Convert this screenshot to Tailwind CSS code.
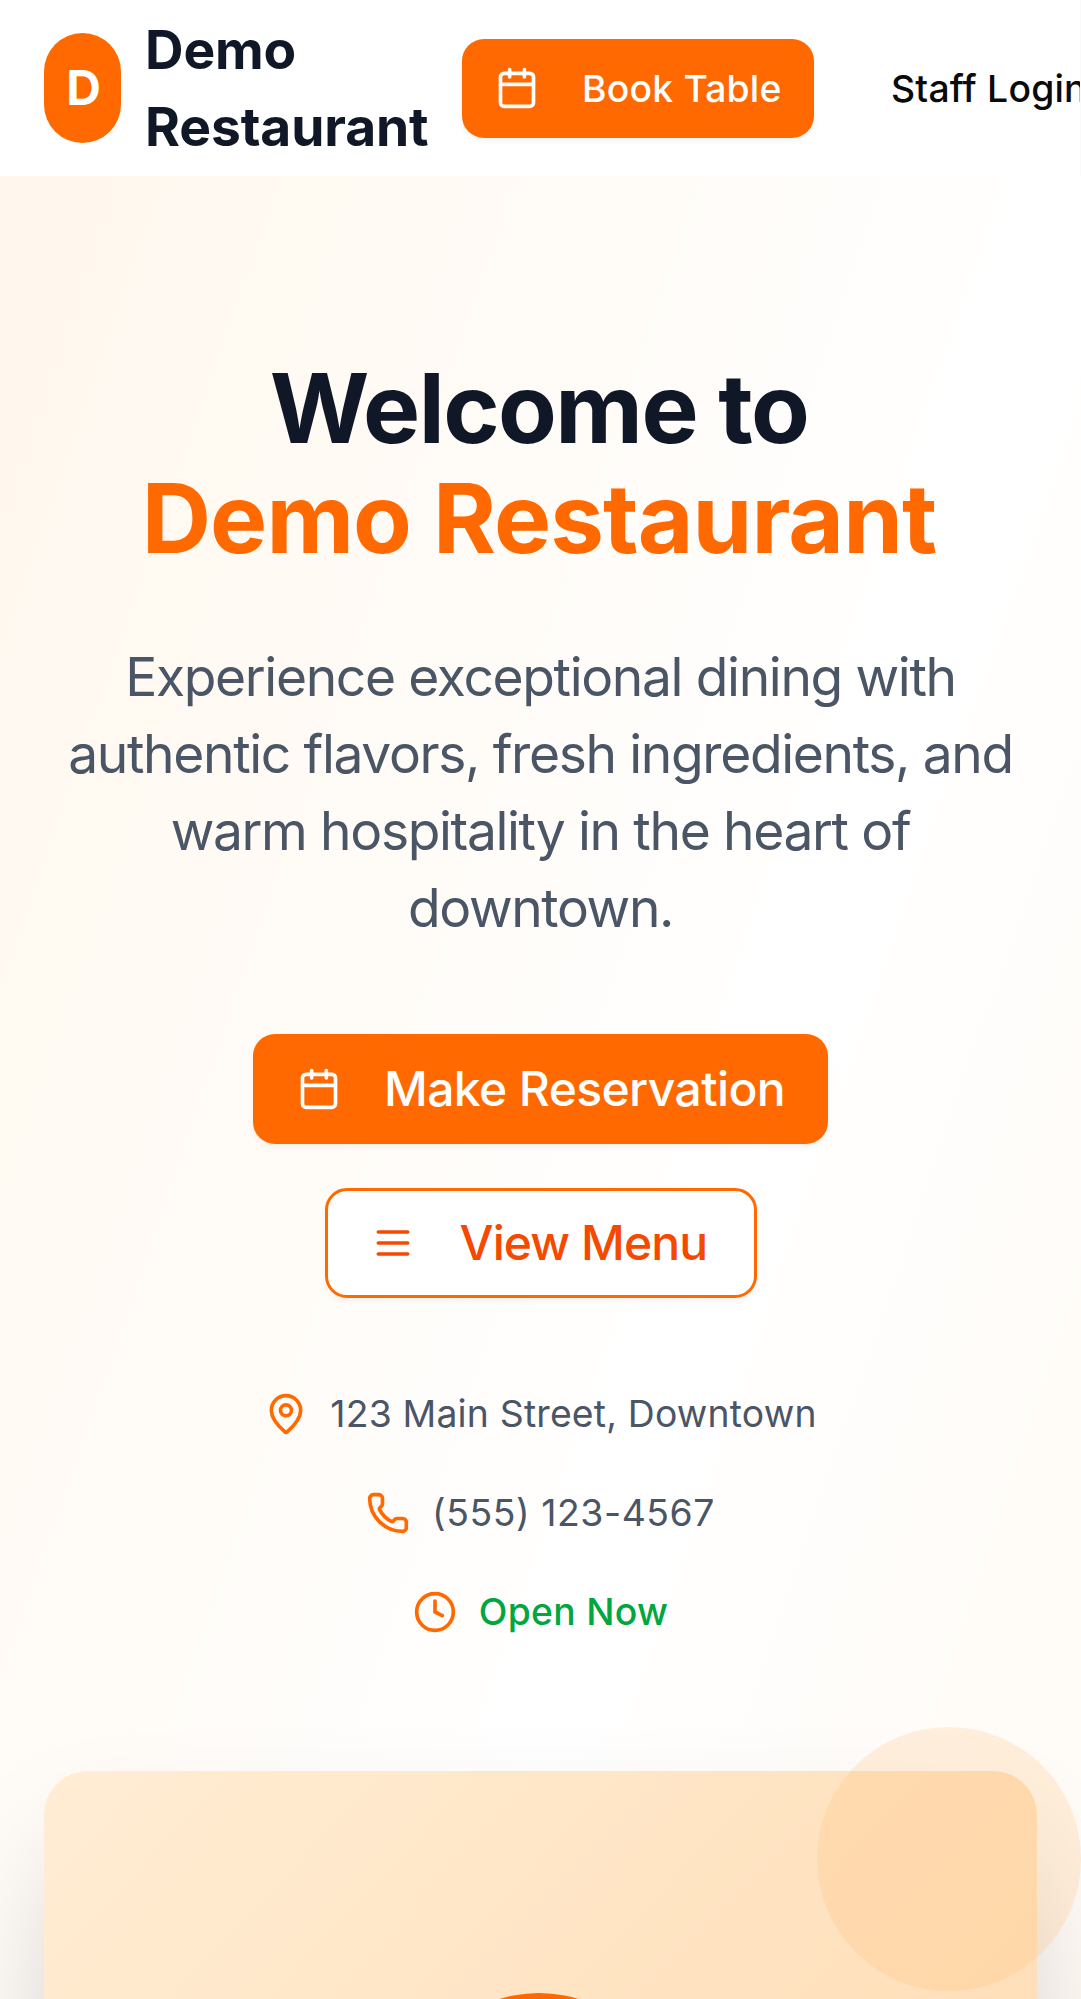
<!DOCTYPE html>
<html lang="en">
<head>
<meta charset="utf-8">
<meta name="viewport" content="width=device-width, initial-scale=1">
<title>Demo Restaurant</title>
<script src="https://cdn.jsdelivr.net/npm/@tailwindcss/browser@4"></script>
</head>
<body class="bg-white font-['Inter',sans-serif] text-[#0a0a0a]">
<svg class="hidden">
  <symbol id="calendar" viewBox="0 0 24 24"><path d="M8 2v4M16 2v4M3 10h18"/><rect width="18" height="18" x="3" y="4" rx="2"/></symbol>
  <symbol id="menu" viewBox="0 0 24 24"><path d="M4 6h16M4 12h16M4 18h16"/></symbol>
  <symbol id="pin" viewBox="0 0 24 24"><path d="M20 10c0 4.993-5.539 10.193-7.399 11.799a1 1 0 0 1-1.202 0C9.539 20.193 4 14.993 4 10a8 8 0 0 1 16 0"/><circle cx="12" cy="10" r="3"/></symbol>
  <symbol id="phone" viewBox="0 0 24 24"><path d="M13.832 16.568a1 1 0 0 0 1.213-.303l.355-.465A2 2 0 0 1 17 15h3a2 2 0 0 1 2 2v3a2 2 0 0 1-2 2A18 18 0 0 1 2 4a2 2 0 0 1 2-2h3a2 2 0 0 1 2 2v3a2 2 0 0 1-.8 1.6l-.468.351a1 1 0 0 0-.292 1.233 14 14 0 0 0 6.392 6.384"/></symbol>
  <symbol id="clock" viewBox="0 0 24 24"><circle cx="12" cy="12" r="10"/><path d="M12 6v6l4 2"/></symbol>
</svg>

<div class="h-[1999px] overflow-hidden">
<header class="flex h-44 w-full items-center overflow-hidden border-r border-[#fafafa] bg-white pl-11">
  <div class="flex h-[110px] w-[77px] shrink-0 items-center justify-center rounded-full bg-[#ff6900] pl-0.5 text-[48px] font-bold text-white">D</div>
  <div class="ml-6 w-[317px] shrink-0 text-[53.35px] leading-[77px] font-bold tracking-[-0.12px] text-[#101828]">Demo<br>Restaurant</div>
  <button class="flex h-[99px] w-[352px] shrink-0 items-center gap-[43px] rounded-[22px] bg-[#ff6900] pl-[33px] text-[37.35px] font-medium tracking-[0.19px] whitespace-nowrap text-white shadow-[0_3px_6px_rgb(0_0_0/0.05)]">
    <svg class="size-11 shrink-0 fill-none stroke-current stroke-2 [stroke-linecap:round] [stroke-linejoin:round]"><use href="#calendar"/></svg>
    <span class="pt-0.5">Book Table</span>
  </button>
  <button class="ml-11 shrink-0 pt-0.5 pl-[33px] text-[37.35px] font-medium tracking-[0.19px] whitespace-nowrap">Staff Login</button>
</header>

<section class="h-[3160px] bg-linear-to-br from-[#fff7ed] via-white to-[#fff7ed] px-11 pt-44">
  <div class="flex flex-col items-center text-center">
    <h1 class="mb-[65px] pt-px pr-[3px] text-[96px] leading-[110px] font-bold text-[#101828]">
      <span class="block tracking-[-1.56px]">Welcome to</span>
      <span class="block tracking-[-0.9px] text-[#ff6900]">Demo Restaurant</span>
    </h1>
    <p class="mb-[88px] text-[53.35px] leading-[77px] tracking-[-1.36px] whitespace-nowrap text-[#4a5565]">Experience exceptional dining with<br>authentic flavors, fresh ingredients, and<br>warm hospitality in the heart of<br>downtown.</p>
    <div class="mb-[88px] flex flex-col items-center gap-11">
      <button class="flex h-[110px] w-[575px] items-center gap-[43px] rounded-[22px] bg-[#ff6900] pl-11 text-[48px] font-medium tracking-[-0.6px] whitespace-nowrap text-white shadow-[0_3px_6px_rgb(0_0_0/0.05)]">
        <svg class="size-11 shrink-0 fill-none stroke-current stroke-2 [stroke-linecap:round] [stroke-linejoin:round]"><use href="#calendar"/></svg>
        Make Reservation
      </button>
      <button class="flex h-[110px] w-[432px] items-center gap-[45px] rounded-[22px] border-3 border-[#ff6900] bg-white pl-[43px] text-[48px] font-medium tracking-[-0.9px] whitespace-nowrap text-[#f54900] shadow-[0_3px_6px_rgb(0_0_0/0.05)]">
        <svg class="size-11 shrink-0 fill-none stroke-current stroke-2 [stroke-linecap:round] [stroke-linejoin:round]"><use href="#menu"/></svg>
        View Menu
      </button>
    </div>
    <div class="flex flex-col items-center gap-11 text-[37.35px] leading-[55px] text-[#4a5565]">
      <div class="flex items-center gap-[22px]">
        <svg class="size-11 fill-none stroke-[#ff6900] stroke-2 [stroke-linecap:round] [stroke-linejoin:round]"><use href="#pin"/></svg>
        <span class="tracking-[0.18px]">123 Main Street, Downtown</span>
      </div>
      <div class="flex items-center gap-[22px]">
        <svg class="size-11 fill-none stroke-[#ff6900] stroke-2 [stroke-linecap:round] [stroke-linejoin:round]"><use href="#phone"/></svg>
        <span class="tracking-[0.57px]">(555) 123-4567</span>
      </div>
      <div class="flex items-center gap-[22px]">
        <svg class="size-11 fill-none stroke-[#ff6900] stroke-2 [stroke-linecap:round] [stroke-linejoin:round]"><use href="#clock"/></svg>
        <span class="font-medium tracking-[0.28px] text-[#00a63e]">Open Now</span>
      </div>
    </div>
  </div>
  <div class="relative mt-[132px]">
    <div class="flex h-[1056px] flex-col items-center rounded-[44px] bg-linear-to-br from-[#ffedd4] to-[#ffd6a7] pt-[222px] pr-[3px] shadow-[0_69px_137px_-33px_rgb(0_0_0/0.25)]">
      <div class="size-[264px] rounded-full bg-[#ff6900]"></div>
    </div>
    <div class="absolute -top-11 -right-11 size-[264px] rounded-full bg-[#ffb86a]/20"></div>
  </div>
</section>
</div>
</body>
</html>
